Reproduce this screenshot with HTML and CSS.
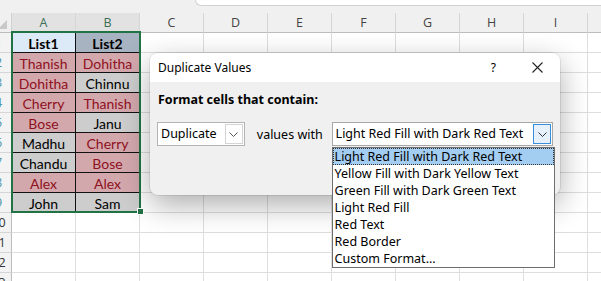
FILE: index.html
```html
<!DOCTYPE html>
<html lang="en">
<head>
  <meta charset="UTF-8">
  <meta name="viewport" content="width=device-width, initial-scale=1.0">
  <title>Duplicate Values</title>
  <link rel="stylesheet" href="styles.css">
</head>
<body>
  <div class="top">
    <div class="formula"></div>
  </div>
  <div class="sheet" id="sheet">
    <div class="corner"></div>
    <div class="col-head selected">A</div>
    <div class="col-head selected">B</div>
    <div class="col-head">C</div>
    <div class="col-head">D</div>
    <div class="col-head">E</div>
    <div class="col-head">F</div>
    <div class="col-head">G</div>
    <div class="col-head">H</div>
    <div class="col-head">I</div>
    <div class="col-head"></div>
    <div class="block">
      <div class="cell active">List1</div>
      <div class="cell title">List2</div>
      <div class="cell dup">Thanish</div>
      <div class="cell dup">Dohitha</div>
      <div class="cell dup">Dohitha</div>
      <div class="cell">Chinnu</div>
      <div class="cell dup">Cherry</div>
      <div class="cell dup">Thanish</div>
      <div class="cell dup">Bose</div>
      <div class="cell">Janu</div>
      <div class="cell">Madhu</div>
      <div class="cell dup">Cherry</div>
      <div class="cell">Chandu</div>
      <div class="cell dup">Bose</div>
      <div class="cell dup">Alex</div>
      <div class="cell dup">Alex</div>
      <div class="cell">John</div>
      <div class="cell">Sam</div>
      <div class="frame"><span class="handle"></span></div>
    </div>
  </div>

  <div class="dialog">
    <div class="dialog-title">
      <span class="title-text">Duplicate Values</span>
      <span class="help">?</span>
      <svg class="close" width="11" height="11" viewBox="0 0 11 11">
        <path d="M0.5 0.5L10.5 10.5M10.5 0.5L0.5 10.5" stroke="#222" stroke-width="1.1" fill="none"/>
      </svg>
    </div>
    <div class="dialog-body">
      <div class="heading">Format cells that contain:</div>
      <div class="controls">
        <div class="combo small">
          <span class="combo-text">Duplicate</span>
          <span class="combo-btn">
            <svg width="9" height="5" viewBox="0 0 9 5"><path d="M0.5 0.5L4.5 4.5L8.5 0.5" stroke="#555" fill="none"/></svg>
          </span>
        </div>
        <span class="label">values with</span>
        <div class="combo wide">
          <span class="combo-text">Light Red Fill with Dark Red Text</span>
          <span class="combo-btn focus">
            <svg width="9" height="5" viewBox="0 0 9 5"><path d="M0.5 0.5L4.5 4.5L8.5 0.5" stroke="#333" fill="none"/></svg>
          </span>
          <ul class="list">
            <li class="current">Light Red Fill with Dark Red Text</li>
            <li>Yellow Fill with Dark Yellow Text</li>
            <li>Green Fill with Dark Green Text</li>
            <li>Light Red Fill</li>
            <li>Red Text</li>
            <li>Red Border</li>
            <li>Custom Format...</li>
          </ul>
        </div>
      </div>
    </div>
  </div>

  <script>
    // fill the empty part of the grid: row headers and blank cells
    const sheet = document.getElementById('sheet');
    for (let r = 1; r <= 13; r++) {
      const head = document.createElement('div');
      head.className = 'row-head' + (r <= 9 ? ' selected' : '');
      head.textContent = r;
      sheet.appendChild(head);
      const first = r <= 9 ? 3 : 1;
      for (let c = first; c <= 10; c++) {
        const cell = document.createElement('div');
        cell.className = 'grid-cell';
        sheet.appendChild(cell);
      }
    }
  </script>
</body>
</html>
```

FILE: styles.css
```css
body {
  margin: 0;
  width: 601px;
  height: 281px;
  overflow: hidden;
  background-color: #fff;
  font-family: Lato, "Open Sans", sans-serif;
  color: #000;
}

.top {
  height: 13px;
  background-color: #f0f0f0;
  padding-left: 195px;
}

.formula {
  height: 5px;
  background-color: #fff;
  border-left: 1px solid #d2d2d2;
  border-bottom: 1px solid #d2d2d2;
  border-bottom-left-radius: 6px;
}

.sheet {
  display: grid;
  grid-template-columns: 26px repeat(10, 64px);
  grid-auto-rows: 20px;
  margin-left: -14px;
}

.sheet > div {
  box-sizing: border-box;
}

.corner {
  background-color: #f0f0f0;
  border-right: 1px solid #d0d0d0;
  border-bottom: 1px solid #bdbdbd;
  position: relative;
}

.corner::after {
  content: '';
  position: absolute;
  right: 4px;
  bottom: 3px;
  border-left: 9px solid transparent;
  border-bottom: 9px solid #c8c8c8;
}

.col-head {
  background-color: #f0f0f0;
  border-right: 1px solid #d6d6d6;
  border-bottom: 1px solid #bdbdbd;
  display: flex;
  align-items: center;
  justify-content: center;
  font-family: "Open Sans", sans-serif;
  font-size: 12.5px;
  color: #444;
}

.col-head.selected {
  background-color: #e2e2e2;
  color: #3c6e55;
}

.row-head {
  background-color: #f3f3f3;
  border-right: 1px solid #bdbdbd;
  border-bottom: 1px solid #d6d6d6;
  display: flex;
  align-items: center;
  justify-content: center;
  font-family: "Open Sans", sans-serif;
  font-size: 12.5px;
  color: #333;
  overflow: hidden;
}

.row-head.selected {
  color: #4b94a6;
}

.grid-cell {
  border-right: 1px solid #dedede;
  border-bottom: 1px solid #dedede;
}

.block {
  grid-column: 2 / 4;
  grid-row: 2 / 11;
  display: grid;
  grid-template-columns: 64px 64px;
  grid-auto-rows: 20px;
  position: relative;
}

.cell {
  box-sizing: border-box;
  border-right: 1px solid #111;
  border-bottom: 1px solid #111;
  background-color: #cdcdcd;
  display: flex;
  align-items: center;
  justify-content: center;
  font-size: 14px;
  padding-top: 1px;
}

.cell.dup {
  background-color: #d3a8ad;
  color: #8f1020;
}

.cell.active {
  background-color: #dceaf7;
  font-weight: bold;
}

.cell.title {
  background-color: #a8b3c1;
  font-weight: bold;
}

.frame {
  position: absolute;
  top: -2px;
  left: -1px;
  right: -1px;
  bottom: 0;
  border: 2px solid #217346;
  pointer-events: none;
}

.handle {
  position: absolute;
  right: -5px;
  bottom: -4px;
  width: 5px;
  height: 5px;
  background-color: #217346;
  border: 1px solid #fff;
}

/* dialog */
.dialog {
  position: absolute;
  left: 150px;
  top: 53px;
  width: 410px;
  height: 142px;
  background-color: #f0f0f0;
  border-radius: 8px;
  box-shadow: 0 10px 30px rgba(0, 0, 0, 0.32), 0 0 0 1px rgba(0, 0, 0, 0.08);
  font-family: "Noto Sans", sans-serif;
  font-size: 12.5px;
}

.dialog-title {
  height: 29px;
  background-color: #fff;
  border-radius: 8px 8px 0 0;
  display: flex;
  align-items: center;
  padding: 0 17px 0 8px;
  font-size: 12px;
}

.title-text {
  flex: 1;
}

.help {
  margin-right: 36px;
}

.dialog-body {
  padding: 10px 7px 0;
}

.heading {
  font-weight: bold;
  line-height: 16px;
  padding-left: 1px;
  margin-bottom: 14px;
}

.controls {
  display: flex;
  align-items: center;
}

.combo {
  position: relative;
  display: flex;
  height: 24px;
  box-sizing: border-box;
  border: 1px solid #b4b4b4;
  background-color: #fff;
}

.combo.small {
  width: 88px;
}

.combo.wide {
  width: 222px;
  border-color: #a8a8a8;
}

.combo-text {
  flex: 1;
  padding-left: 3px;
  line-height: 22px;
  white-space: nowrap;
}

.combo-btn {
  width: 16px;
  margin: 1px;
  border: 1px solid #d4d4d4;
  display: flex;
  align-items: center;
  justify-content: center;
}

.combo-btn.focus {
  border-color: #3a8dd8;
  background-color: #e6f1fb;
}

.label {
  width: 87px;
  padding-left: 12px;
  box-sizing: border-box;
}

.list {
  position: absolute;
  top: 24px;
  left: -1px;
  width: 223px;
  margin: 0;
  padding: 0;
  list-style: none;
  box-sizing: border-box;
  background-color: #fff;
  border: 1px solid #6e6e6e;
}

.list li {
  height: 17px;
  line-height: 17px;
  padding-left: 2px;
  white-space: nowrap;
}

.list li.current {
  background-color: #a3cdf1;
  outline: 1px dotted #333;
  outline-offset: -1px;
}
```
